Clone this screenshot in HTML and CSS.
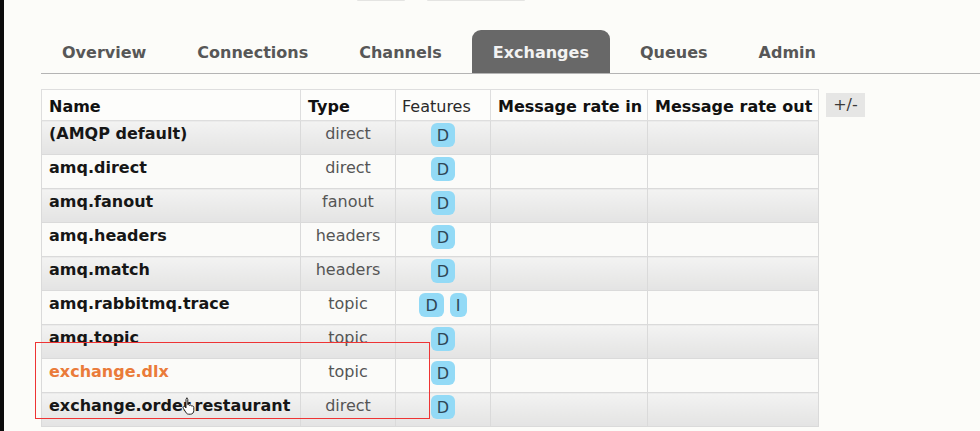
FILE: index.html
```html
<!DOCTYPE html>
<html>
<head>
<meta charset="utf-8">
<link rel="stylesheet" href="styles.css">
</head>
<body>
<div class="screen">
  <div class="strip"></div>
  <div class="main">
    <div class="topbits"><span class="bit bit1"></span><span class="bit bit2"></span></div>
    <ul class="tabs">
      <li class="tab">Overview</li>
      <li class="tab">Connections</li>
      <li class="tab">Channels</li>
      <li class="tab active">Exchanges</li>
      <li class="tab">Queues</li>
      <li class="tab">Admin</li>
    </ul>
    <div class="content">
      <table class="list">
        <colgroup>
          <col class="c-name"><col class="c-type"><col class="c-feat"><col class="c-in"><col class="c-out">
        </colgroup>
        <thead>
          <tr><th>Name</th><th>Type</th><th class="plain">Features</th><th>Message rate in</th><th>Message rate out</th></tr>
        </thead>
        <tbody>
          <tr class="alt"><td class="name">(AMQP default)</td><td class="type">direct</td><td class="feat"><abbr class="badge">D</abbr></td><td></td><td></td></tr>
          <tr><td class="name">amq.direct</td><td class="type">direct</td><td class="feat"><abbr class="badge">D</abbr></td><td></td><td></td></tr>
          <tr class="alt"><td class="name">amq.fanout</td><td class="type">fanout</td><td class="feat"><abbr class="badge">D</abbr></td><td></td><td></td></tr>
          <tr><td class="name">amq.headers</td><td class="type">headers</td><td class="feat"><abbr class="badge">D</abbr></td><td></td><td></td></tr>
          <tr class="alt"><td class="name">amq.match</td><td class="type">headers</td><td class="feat"><abbr class="badge">D</abbr></td><td></td><td></td></tr>
          <tr><td class="name">amq.rabbitmq.trace</td><td class="type">topic</td><td class="feat"><abbr class="badge">D</abbr><abbr class="badge">I</abbr></td><td></td><td></td></tr>
          <tr class="alt"><td class="name">amq.topic</td><td class="type">topic</td><td class="feat"><abbr class="badge">D</abbr></td><td></td><td></td></tr>
          <tr><td class="name orange">exchange.dlx</td><td class="type">topic</td><td class="feat"><abbr class="badge">D</abbr></td><td></td><td></td></tr>
          <tr class="alt"><td class="name">exchange.order.restaurant</td><td class="type">direct</td><td class="feat"><abbr class="badge">D</abbr></td><td></td><td></td></tr>
        </tbody>
      </table>
      <span class="toggle">+/-</span>
    </div>
    <div class="highlight"></div>
    <svg class="cursor" width="14" height="18" viewBox="0 0 14 18">
      <path d="M4.5 1.2c.8 0 1.3.5 1.3 1.3v5.2l.6-.1c.7 0 1.1.4 1.2.9.3-.3.7-.4 1.1-.3.6.1.9.5 1 1 .3-.2.7-.3 1.1-.2.7.2 1 .7 1 1.4v3.2c0 2-1.3 3.6-3.4 3.6H6.6c-1 0-1.8-.5-2.4-1.3L1.3 11.3c-.4-.6-.3-1.3.2-1.6.5-.4 1.2-.3 1.6.2l.9 1.1V2.5c0-.8.6-1.3 1.3-1.3z" fill="#fff" stroke="#222" stroke-width="1"/>
    </svg>
  </div>
</div>
</body>
</html>
```

FILE: styles.css
```css
html, body {
  margin: 0;
  padding: 0;
  background: #fcfcf9;
}

.screen {
  display: flex;
  width: 980px;
  height: 431px;
  overflow: hidden;
  font-family: "DejaVu Sans", Verdana, sans-serif;
}

.strip {
  width: 4px;
  flex: none;
  background: #0c0c0c;
}

.main {
  position: relative;
  flex: 1;
  padding-left: 37px;
}

.topbits {
  display: flex;
  height: 2px;
  padding-left: 316px;
  gap: 22px;
}

.bit {
  display: block;
  height: 1px;
  background: #e4e4e2;
  border-radius: 0 0 3px 3px;
}

.bit1 { width: 48px; }
.bit2 { width: 98px; }

.tabs {
  display: flex;
  list-style: none;
  margin: 28px 0 0;
  padding: 0;
  border-bottom: 1px solid #b4b4b4;
}

.tab {
  height: 43px;
  line-height: 46px;
  padding: 0 21px;
  margin-right: 9px;
  font-size: 16px;
  font-weight: bold;
  color: #575757;
}

.tab.active {
  background: #686868;
  color: #f2f2f2;
  border-radius: 9px 9px 0 0;
}

.content {
  display: flex;
  align-items: flex-start;
  gap: 7px;
  margin-top: 15px;
}

.list {
  border-collapse: collapse;
  table-layout: fixed;
  width: 777px;
  font-size: 16px;
}

.c-name { width: 259px; }
.c-type { width: 95px; }
.c-feat { width: 95px; }
.c-in { width: 157px; }
.c-out { width: 171px; }

.list th {
  box-sizing: border-box;
  height: 31px;
  padding: 7px 7px 0;
  border: 1px solid #dedede;
  background: #fdfdfb;
  line-height: 20px;
  vertical-align: top;
  white-space: nowrap;
  text-align: left;
  color: #111;
}

.list th.plain {
  font-weight: normal;
  padding-left: 6px;
  color: #2a2a2a;
}

.list td {
  height: 34px;
  padding: 3px 7px 0;
  border: 1px solid #dadada;
  line-height: 20px;
  vertical-align: top;
  white-space: nowrap;
  background: #fbfbf9;
  box-sizing: border-box;
}

.list tr.alt td {
  background: linear-gradient(#f3f3f2, #e3e3e3);
}

.list td.name {
  font-weight: bold;
  color: #161616;
}

.list td.orange {
  color: #ea7b3a;
}

.list td.type {
  text-align: center;
  color: #555;
}

.list td.feat {
  text-align: center;
  padding-top: 2px;
}

.badge {
  display: inline-block;
  height: 24px;
  line-height: 25px;
  padding: 0 6px;
  margin: 0 3px;
  border-radius: 6px;
  background: #93daf6;
  color: #2e4756;
  text-decoration: none;
  font-size: 16px;
}

.toggle {
  display: block;
  margin-top: 4px;
  width: 39px;
  height: 24px;
  line-height: 24px;
  text-align: center;
  background: #e6e6e5;
  color: #3a3a3a;
  font-size: 16px;
}

.highlight {
  position: absolute;
  left: 31px;
  top: 342px;
  width: 393px;
  height: 75px;
  border: 1px solid #ee3434;
}

.cursor {
  position: absolute;
  left: 178px;
  top: 397px;
}
```
